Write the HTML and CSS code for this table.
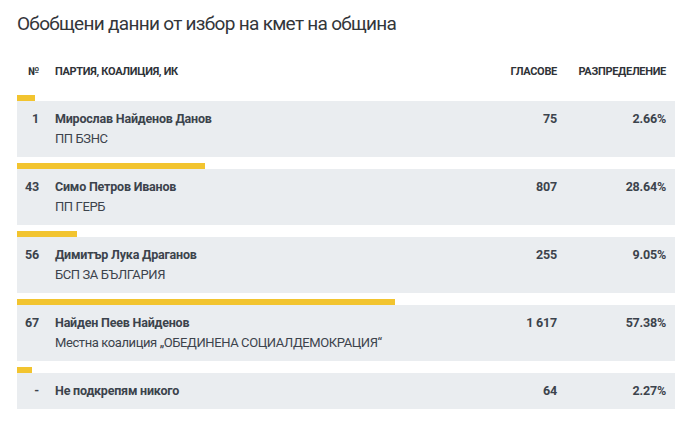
FILE: index.html
```html
<!DOCTYPE html>
<html lang="bg">
<head>
<meta charset="utf-8">
<link rel="stylesheet" href="styles.css">
</head>
<body>
<div class="wrap">
  <h1 class="title">Обобщени данни от избор на кмет на община</h1>
  <div class="head">
    <div class="c num">№</div>
    <div class="c name">ПАРТИЯ, КОАЛИЦИЯ, ИК</div>
    <div class="c votes">ГЛАСОВЕ</div>
    <div class="c pct">РАЗПРЕДЕЛЕНИЕ</div>
  </div>
  <div class="row">
    <div class="bar" style="width:2.66%"></div>
    <div class="cells">
      <div class="c num">1</div>
      <div class="c name"><b>Мирослав Найденов Данов</b><span>ПП БЗНС</span></div>
      <div class="c votes">75</div>
      <div class="c pct">2.66%</div>
    </div>
  </div>
  <div class="row">
    <div class="bar" style="width:28.64%"></div>
    <div class="cells">
      <div class="c num">43</div>
      <div class="c name"><b>Симо Петров Иванов</b><span>ПП ГЕРБ</span></div>
      <div class="c votes">807</div>
      <div class="c pct">28.64%</div>
    </div>
  </div>
  <div class="row">
    <div class="bar" style="width:9.05%"></div>
    <div class="cells">
      <div class="c num">56</div>
      <div class="c name"><b>Димитър Лука Драганов</b><span>БСП ЗА БЪЛГАРИЯ</span></div>
      <div class="c votes">255</div>
      <div class="c pct">9.05%</div>
    </div>
  </div>
  <div class="row">
    <div class="bar" style="width:57.38%"></div>
    <div class="cells">
      <div class="c num">67</div>
      <div class="c name"><b>Найден Пеев Найденов</b><span>Местна коалиция „ОБЕДИНЕНА СОЦИАЛДЕМОКРАЦИЯ“</span></div>
      <div class="c votes">1 617</div>
      <div class="c pct">57.38%</div>
    </div>
  </div>
  <div class="row">
    <div class="bar" style="width:2.27%"></div>
    <div class="cells">
      <div class="c num">-</div>
      <div class="c name"><b>Не подкрепям никого</b></div>
      <div class="c votes">64</div>
      <div class="c pct">2.27%</div>
    </div>
  </div>
</div>
</body>
</html>
```
FILE: styles.css
```css
* { box-sizing: border-box; }
body {
  margin: 0;
  background: #fff;
  font-family: Roboto, "Liberation Sans", sans-serif;
  color: #3c434c;
}
.wrap {
  padding: 12px 15px 0 17px;
}
.title {
  margin: 0;
  font-size: 19px;
  line-height: 24px;
  font-weight: 400;
  color: #33363a;
  letter-spacing: -0.7px;
}
.head, .cells {
  display: grid;
  grid-template-columns: 30px 1fr 80px 110px;
}
.head {
  margin-top: 28px;
  padding-bottom: 15px;
  font-size: 11px;
  line-height: 16px;
  font-weight: 700;
  color: #2f3338;
  letter-spacing: -0.3px;
}
.c { padding: 0 8px; }
.c.num { text-align: right; }
.c.pct { padding-right: 9px; }
.votes, .pct { text-align: right; }
.row { margin-bottom: 6px; }
.bar { height: 6px; background: #f2c42f; }
.cells {
  background: #eaedf0;
  padding: 8px 0;
  font-size: 12.5px;
  line-height: 20px;
  font-weight: 700;
  letter-spacing: -0.2px;
}
.name b { display: block; font-weight: 700; }
.name span { display: block; font-weight: 400; font-size: 13px; letter-spacing: -0.4px; }
```
